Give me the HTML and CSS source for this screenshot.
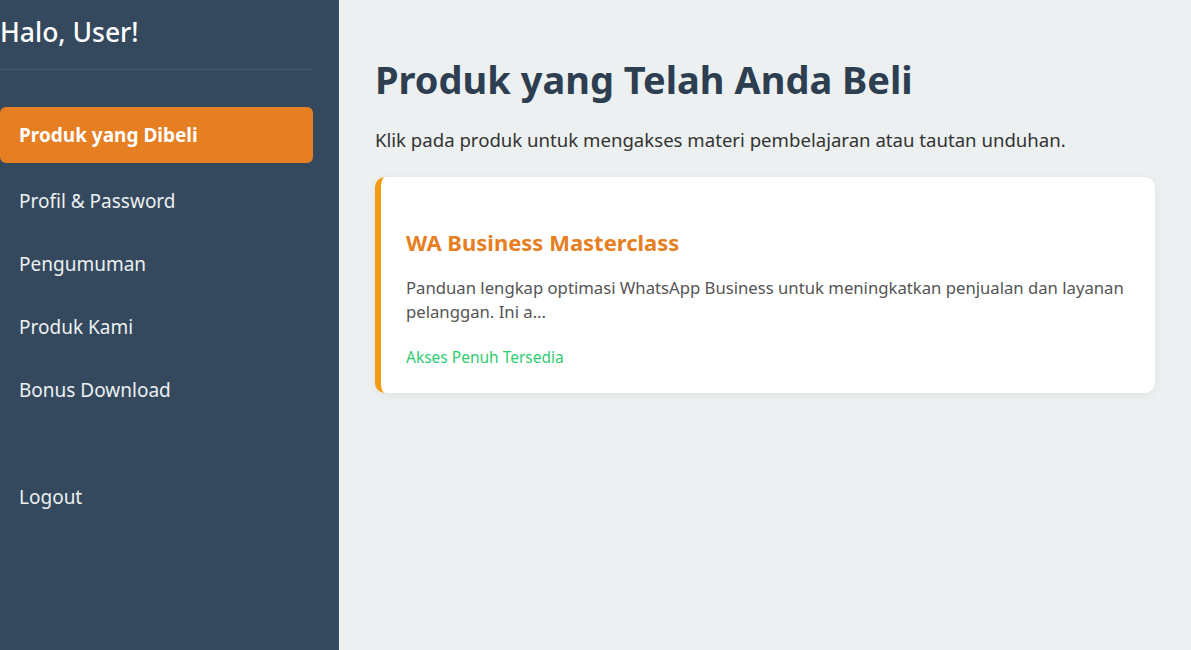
FILE: index.html
```html
<!DOCTYPE html>
<html lang="id">
<head>
<meta charset="UTF-8" />
<meta name="viewport" content="width=device-width, initial-scale=1.0"/>
<title>Dashboard Member</title>
<link rel="stylesheet" href="styles.css">
</head>
<body>

<div class="layout">
  <aside class="sidebar">
    <h2 class="greeting">Halo, User!</h2>
    <nav class="side-nav">
      <a href="#" class="nav-link active">Produk yang Dibeli</a>
      <a href="#" class="nav-link">Profil &amp; Password</a>
      <a href="#" class="nav-link">Pengumuman</a>
      <a href="#" class="nav-link">Produk Kami</a>
      <a href="#" class="nav-link">Bonus Download</a>
      <a href="#" class="nav-link logout">Logout</a>
    </nav>
  </aside>

  <main class="content">
    <h1>Produk yang Telah Anda Beli</h1>
    <p class="intro">Klik pada produk untuk mengakses materi pembelajaran atau tautan unduhan.</p>

    <!-- daftar produk -->
    <div class="product-card">
      <h3 class="product-title">WA Business Masterclass</h3>
      <p class="product-desc">Panduan lengkap optimasi WhatsApp Business untuk meningkatkan penjualan dan layanan pelanggan. Ini a...</p>
      <span class="product-status">Akses Penuh Tersedia</span>
    </div>
  </main>
</div>

</body>
</html>
```

FILE: styles.css
```css
body {
  font-family: 'Noto Sans', 'Open Sans', Arial, sans-serif;
  background-color: #ecf0f1;
  margin: 0;
}
.layout {
  display: flex;
  min-height: 100vh;
}
.sidebar {
  width: 313px;
  padding-right: 25px;
  background-color: #34495e;
  color: #fff;
  box-shadow: 1px 0 0 #3f5467;
}
.greeting {
  font-size: 26.5px;
  font-weight: 500;
  margin: 0;
  padding: 14px 0 19px;
  border-bottom: 1px solid #46596b;
}
.side-nav {
  display: flex;
  flex-direction: column;
  padding-top: 37px;
}
.nav-link {
  display: block;
  padding: 15px 19px;
  margin-bottom: 7px;
  color: #ecf0f1;
  text-decoration: none;
  font-size: 19px;
  border-radius: 6px;
}
.nav-link.active {
  background-color: #e67e22;
  color: #fff;
  font-weight: bold;
  margin-bottom: 10px;
}
.nav-link.logout {
  margin-top: 44px;
}
.content {
  flex: 1;
  padding: 53px 36px 40px 37px;
}
h1 {
  font-size: 38px;
  color: #2c3e50;
  margin: 0 0 22px;
}
.intro {
  font-size: 18.6px;
  color: #333;
  margin: 0 0 25px;
}
.product-card {
  background: #fff;
  border-left: 6px solid #f39c12;
  border-radius: 10px;
  padding: 50px 25px 25px;
  box-shadow: 0 2px 8px rgba(0,0,0,0.06);
}
.product-title {
  color: #e67e22;
  font-size: 22px;
  margin: 0 0 19px;
}
.product-desc {
  color: #555;
  font-size: 16.7px;
  line-height: 24px;
  margin: 0 0 22px;
}
.product-status {
  color: #2ecc71;
  font-size: 15.5px;
}
```
